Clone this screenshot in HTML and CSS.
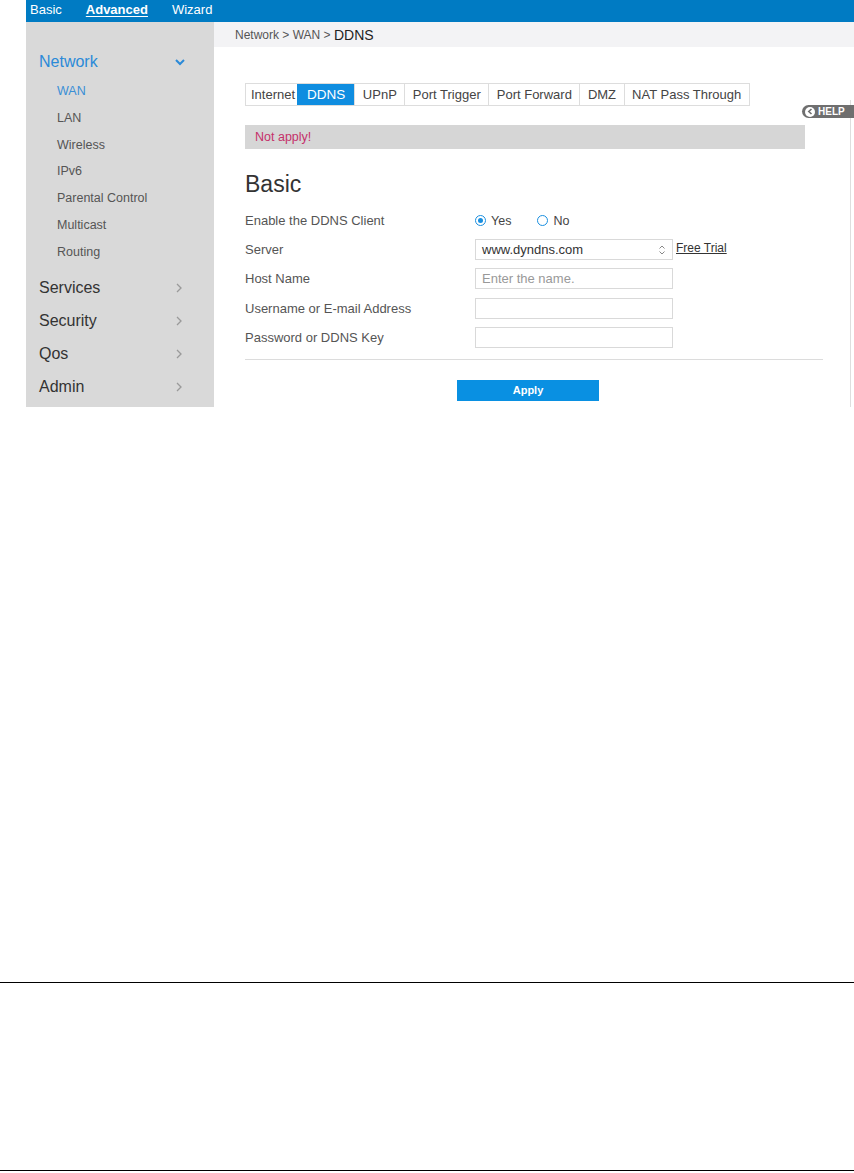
FILE: index.html
```html
<!DOCTYPE html>
<html lang="en">

<head>
     <meta charset="UTF-8" />
     <title>DDNS - Advanced</title>
     <meta name="viewport" content="width=device-width, initial-scale=1" />
     <link rel="stylesheet" href="styles.css">
</head>

<body>

     <div class="page">
          <header class="topbar">
               <a href="#">Basic</a>
               <a href="#" class="active">Advanced</a>
               <a href="#">Wizard</a>
          </header>

          <div class="layout">
               <aside class="sidebar">
                    <div class="menu-title open">
                         <span>Network</span>
                         <svg width="12" height="8" viewBox="0 0 12 8"><path d="M2 2l4 4 4-4" fill="none" stroke="#2b8ad8" stroke-width="2"/></svg>
                    </div>
                    <ul class="submenu">
                         <li class="current">WAN</li>
                         <li>LAN</li>
                         <li>Wireless</li>
                         <li>IPv6</li>
                         <li>Parental Control</li>
                         <li>Multicast</li>
                         <li>Routing</li>
                    </ul>
                    <div class="menu-title">
                         <span>Services</span>
                         <svg width="8" height="12" viewBox="0 0 8 12"><path d="M2 2l4 4-4 4" fill="none" stroke="#9a9a9a" stroke-width="1.3"/></svg>
                    </div>
                    <div class="menu-title">
                         <span>Security</span>
                         <svg width="8" height="12" viewBox="0 0 8 12"><path d="M2 2l4 4-4 4" fill="none" stroke="#9a9a9a" stroke-width="1.3"/></svg>
                    </div>
                    <div class="menu-title">
                         <span>Qos</span>
                         <svg width="8" height="12" viewBox="0 0 8 12"><path d="M2 2l4 4-4 4" fill="none" stroke="#9a9a9a" stroke-width="1.3"/></svg>
                    </div>
                    <div class="menu-title">
                         <span>Admin</span>
                         <svg width="8" height="12" viewBox="0 0 8 12"><path d="M2 2l4 4-4 4" fill="none" stroke="#9a9a9a" stroke-width="1.3"/></svg>
                    </div>
               </aside>

               <main class="main">
                    <div class="breadcrumb">Network &gt; WAN &gt; <span>DDNS</span></div>

                    <div class="content">
                         <ul class="tabs">
                              <li>Internet</li>
                              <li class="active">DDNS</li>
                              <li>UPnP</li>
                              <li>Port Trigger</li>
                              <li>Port Forward</li>
                              <li>DMZ</li>
                              <li>NAT Pass Through</li>
                         </ul>

                         <div class="notice">Not apply!</div>

                         <h2>Basic</h2>

                         <div class="form-row">
                              <label>Enable the DDNS Client</label>
                              <div class="radios">
                                   <span class="radio checked"></span><span class="radio-text">Yes</span>
                                   <span class="radio"></span><span class="radio-text">No</span>
                              </div>
                         </div>
                         <div class="form-row">
                              <label>Server</label>
                              <div class="select-box">
                                   <span>www.dyndns.com</span>
                                   <svg width="8" height="12" viewBox="0 0 8 12"><path d="M1.5 4.5L4 2l2.5 2.5M1.5 7.5L4 10l2.5-2.5" fill="none" stroke="#888" stroke-width="1"/></svg>
                              </div>
                              <a href="#" class="trial">Free Trial</a>
                         </div>
                         <div class="form-row">
                              <label>Host Name</label>
                              <input type="text" placeholder="Enter the name.">
                         </div>
                         <div class="form-row">
                              <label>Username or E-mail Address</label>
                              <input type="text">
                         </div>
                         <div class="form-row">
                              <label>Password or DDNS Key</label>
                              <input type="password">
                         </div>

                         <hr class="divider">

                         <button class="apply">Apply</button>

                         <div class="help-rail"></div>
                         <div class="help">
                              <span class="help-icon"><svg width="6" height="7" viewBox="0 0 6 7"><path d="M4.5 1L1.8 3.5 4.5 6" fill="none" stroke="#6f6f6f" stroke-width="1.6"/></svg></span>
                              HELP
                         </div>
                    </div>
               </main>
          </div>
     </div>

     <div class="rules">
          <hr class="rule first">
          <hr class="rule second">
     </div>

</body>

</html>
```

FILE: styles.css
```css
* {
     box-sizing: border-box;
     margin: 0;
     padding: 0;
}

body {
     font-family: 'Liberation Sans', Arial, sans-serif;
     background: white;
     color: #333;
}

.page {
     margin-left: 26px;
     width: 828px;
     overflow: hidden;
}

.topbar {
     height: 22px;
     background: #007bc3;
     display: flex;
     align-items: center;
     padding: 0 0 4px 4px;
     gap: 24px;
}

.topbar a {
     color: white;
     font-size: 13px;
     text-decoration: none;
}

.topbar a.active {
     font-weight: bold;
     text-decoration: underline;
     text-underline-offset: 2px;
}

.layout {
     display: flex;
     height: 385px;
}

.sidebar {
     width: 188px;
     background: #d9d9d9;
     padding-top: 23px;
}

.menu-title {
     height: 33px;
     display: flex;
     align-items: center;
     justify-content: space-between;
     padding: 0 31px 0 13px;
     font-size: 16px;
     color: #333;
}

.menu-title.open {
     color: #2b8ad8;
     padding-right: 28px;
}

.submenu {
     list-style: none;
     margin-bottom: 6px;
}

.submenu li {
     height: 26.8px;
     line-height: 26.8px;
     padding-left: 31px;
     font-size: 12.5px;
     color: #555;
}

.submenu li.current {
     color: #3a8fd6;
}

.main {
     flex: 1;
}

.breadcrumb {
     height: 25px;
     background: #f3f3f5;
     padding: 1px 0 0 21px;
     display: flex;
     align-items: center;
     font-size: 12px;
     color: #555;
     white-space: pre;
}

.breadcrumb span {
     font-size: 14px;
     color: #222;
}

.content {
     position: relative;
     height: 360px;
     padding: 36px 0 0 31px;
}

.tabs {
     list-style: none;
     display: flex;
     width: fit-content;
     border: 1px solid #ddd;
     height: 23px;
}

.tabs li {
     padding: 0 7.5px;
     font-size: 13px;
     line-height: 21px;
     color: #444;
     border-left: 1px solid #ddd;
}

.tabs li:first-child {
     border-left: none;
     padding: 0 2px 0 5px;
}

.tabs li.active {
     background: #0f8de0;
     color: white;
     border-left-color: #0f8de0;
     padding: 0 9px;
     font-size: 13.5px;
}

.notice {
     margin-top: 19px;
     width: 560px;
     height: 24px;
     background: #d6d6d6;
     padding-left: 10px;
     line-height: 24px;
     font-size: 12.5px;
     color: #c5306a;
}

h2 {
     margin-top: 20px;
     font-size: 23px;
     font-weight: normal;
     line-height: 30px;
     color: #333;
     margin-bottom: 7px;
}

.form-row {
     display: flex;
     align-items: center;
     height: 29.2px;
     font-size: 13px;
}

.form-row label {
     width: 230px;
     color: #555;
}

.radios {
     display: flex;
     align-items: center;
}

.radio {
     width: 11px;
     height: 11px;
     border: 1.5px solid #1a8fe0;
     border-radius: 50%;
     position: relative;
}

.radio.checked::after {
     content: "";
     position: absolute;
     left: 1.5px;
     top: 1.5px;
     width: 5px;
     height: 5px;
     border-radius: 50%;
     background: #1a8fe0;
}

.radio-text {
     margin-left: 5px;
     margin-right: 26px;
     color: #444;
     font-size: 12.5px;
}

.select-box,
.form-row input {
     width: 198px;
     height: 21px;
     border: 1px solid #d9d9d9;
     background: white;
}

.select-box {
     display: flex;
     align-items: center;
     justify-content: space-between;
     padding: 0 6px;
     color: #333;
}

.form-row input {
     padding-left: 6px;
     font-family: inherit;
     font-size: 13px;
     color: #333;
     outline: none;
}

.form-row input::placeholder {
     color: #999;
}

.trial {
     margin-left: 3px;
     margin-top: -3px;
     font-size: 12px;
     color: #333;
}

.divider {
     margin-top: 7px;
     width: 578px;
     border: none;
     border-top: 1px solid #dcdcdc;
}

.apply {
     display: block;
     margin: 20px 0 0 212px;
     width: 142px;
     height: 21px;
     border: none;
     background: #0990e2;
     color: white;
     font-family: inherit;
     font-size: 11px;
     font-weight: bold;
}

.help-rail {
     position: absolute;
     top: 53px;
     bottom: 0;
     right: 3px;
     width: 1px;
     background: #dedede;
}

.help {
     position: absolute;
     top: 58px;
     left: 588px;
     height: 13px;
     width: 62px;
     border-radius: 7px;
     background: #6f6f6f;
     color: white;
     font-size: 10px;
     font-weight: bold;
     display: flex;
     align-items: center;
     gap: 3px;
     padding-left: 3px;
}

.help-icon {
     width: 10px;
     height: 10px;
     border-radius: 50%;
     background: white;
     display: flex;
     align-items: center;
     justify-content: center;
}

.rules {
     padding-top: 575px;
}

.rule {
     border: none;
     border-top: 1px solid #000;
}

.rule.second {
     margin-top: 187px;
}
```
